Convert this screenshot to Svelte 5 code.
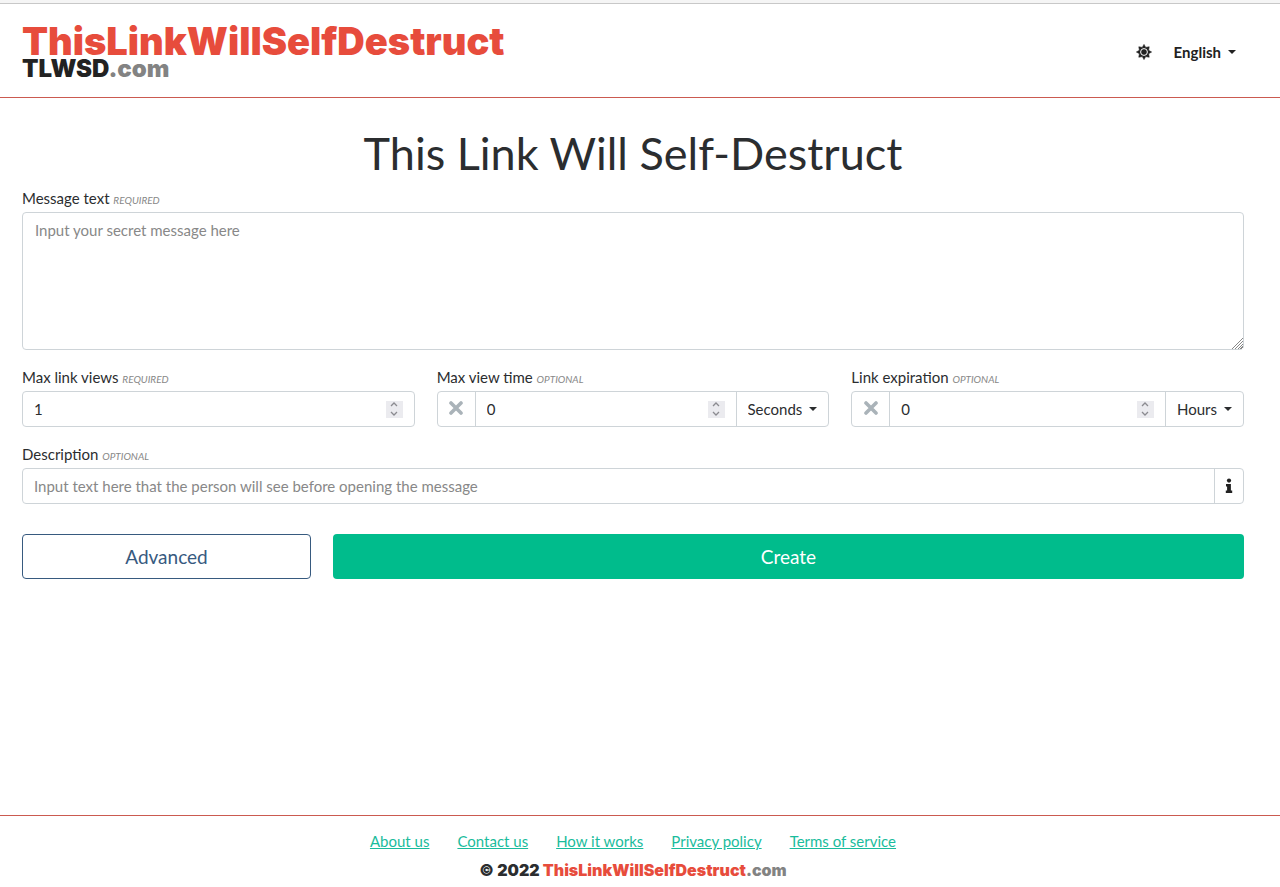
<script lang="ts">
	let message = $state('');
	let description = $state('');
	let views = $state(1);
	let viewTime = $state(0);
	let expiration = $state(0);
	let timeUnit = $state('Seconds');
	let expirationUnit = $state('Hours');
	let language = $state('English');

	const links = ['About us', 'Contact us', 'How it works', 'Privacy policy', 'Terms of service'];
</script>

{#snippet caret()}
	<svg class="caret" width="8" height="4" viewBox="0 0 8 4" aria-hidden="true">
		<path d="M0 0h8L4 4z" fill="currentColor" />
	</svg>
{/snippet}

{#snippet cross()}
	<svg width="16" height="16" viewBox="0 0 16 16" aria-hidden="true">
		<path d="M3 2l10 10M13 2L3 12" stroke="#aab3b9" stroke-width="3.6" stroke-linecap="round" />
	</svg>
{/snippet}

{#snippet spinner(name: string, up: () => void, down: () => void)}
	<div class="spinner">
		<button type="button" aria-label="Increase {name}" onclick={up}>
			<svg width="8" height="5" viewBox="0 0 8 5"><path d="M1 4l3-3 3 3" /></svg>
		</button>
		<button type="button" aria-label="Decrease {name}" onclick={down}>
			<svg width="8" height="5" viewBox="0 0 8 5"><path d="M1 1l3 3 3-3" /></svg>
		</button>
	</div>
{/snippet}

<div class="page">
	<header>
		<a class="logo" href="/">
			<span class="logo-name">ThisLinkWillSelfDestruct</span>
			<span class="logo-short">TLWSD<span class="com">.com</span></span>
		</a>
		<div class="tools">
			<button class="theme" type="button" aria-label="Toggle theme">
				<svg width="16" height="16" viewBox="0 0 16 16" aria-hidden="true">
					<path
						d="M8 .4l1.7 3L13.2 2.8l-.6 3.5L15.6 8l-3 1.7.6 3.5-3.5-.6L8 15.6l-1.7-3-3.5.6.6-3.5L.4 8l3-1.7-.6-3.5 3.5.6z"
						fill="#222"
						stroke="#222"
						stroke-width=".6"
					/>
					<circle cx="8" cy="8" r="3.4" fill="none" stroke="#fff" stroke-width="1" />
				</svg>
			</button>
			<div class="select language">
				<select aria-label="Language" bind:value={language}>
					<option>English</option>
				</select>
				{@render caret()}
			</div>
		</div>
	</header>

	<main>
		<h1>This Link Will Self-Destruct</h1>
		<form onsubmit={(e) => e.preventDefault()}>
			<div class="field wide">
				<label for="message">Message text <em>REQUIRED</em></label>
				<textarea id="message" placeholder="Input your secret message here" bind:value={message}></textarea>
			</div>

			<div class="field third">
				<label for="views">Max link views <em>REQUIRED</em></label>
				<div class="group">
					<input id="views" type="number" min="1" bind:value={views} />
					{@render spinner('views', () => views++, () => (views = Math.max(1, views - 1)))}
				</div>
			</div>

			<div class="field third">
				<label for="view-time">Max view time <em>OPTIONAL</em></label>
				<div class="group">
					<button class="clear" type="button" aria-label="Clear view time" onclick={() => (viewTime = 0)}>
						{@render cross()}
					</button>
					<input id="view-time" type="number" min="0" bind:value={viewTime} />
					{@render spinner('view time', () => viewTime++, () => (viewTime = Math.max(0, viewTime - 1)))}
					<div class="select unit">
						<select aria-label="View time unit" bind:value={timeUnit}>
							<option>Seconds</option>
							<option>Minutes</option>
						</select>
						{@render caret()}
					</div>
				</div>
			</div>

			<div class="field third">
				<label for="expiration">Link expiration <em>OPTIONAL</em></label>
				<div class="group">
					<button class="clear" type="button" aria-label="Clear expiration" onclick={() => (expiration = 0)}>
						{@render cross()}
					</button>
					<input id="expiration" type="number" min="0" bind:value={expiration} />
					{@render spinner('expiration', () => expiration++, () => (expiration = Math.max(0, expiration - 1)))}
					<div class="select unit">
						<select aria-label="Expiration unit" bind:value={expirationUnit}>
							<option>Hours</option>
							<option>Days</option>
						</select>
						{@render caret()}
					</div>
				</div>
			</div>

			<div class="field wide">
				<label for="description">Description <em>OPTIONAL</em></label>
				<div class="group">
					<input
						id="description"
						type="text"
						placeholder="Input text here that the person will see before opening the message"
						bind:value={description}
					/>
					<button class="info" type="button" aria-label="About the description">
						<svg width="8" height="16" viewBox="0 0 8 16" fill="#222" aria-hidden="true">
							<circle cx="4" cy="2.6" r="2.1" />
							<path d="M1 6h4.9v6.6H7.2V15H.8v-2.4h1.3V8.4H1z" />
						</svg>
					</button>
				</div>
			</div>

			<button class="btn advanced" type="button">Advanced</button>
			<button class="btn create" type="submit">Create</button>
		</form>
	</main>

	<footer>
		<nav>
			{#each links as link}
				<a href="/{link.toLowerCase().replaceAll(' ', '-')}">{link}</a>
			{/each}
		</nav>
		<p>© 2022 <span class="brand">ThisLinkWillSelfDestruct</span><span class="com">.com</span></p>
	</footer>
</div>

<style>
	:global(body) {
		background: #fff;
	}

	.page {
		box-sizing: border-box;
		min-height: 100vh;
		display: flex;
		flex-direction: column;
		border-top: 3px solid #f5f5f5;
		color: #2b2d2f;
		font-family: Lato, sans-serif;
		font-size: 15px;
		line-height: 22px;
	}

	.page * {
		box-sizing: border-box;
	}

	button,
	input,
	select,
	textarea {
		margin: 0;
		padding: 0;
		border: 0;
		background: none;
		color: inherit;
		font: inherit;
	}

	button,
	select {
		cursor: pointer;
	}

	header {
		display: flex;
		align-items: center;
		justify-content: space-between;
		padding: 22px 36px 16px 22px;
		border-top: 1px solid #c8c8c8;
		border-bottom: 1px solid #cb5a50;
	}

	.logo {
		display: flex;
		flex-direction: column;
		color: #222;
		font-family: Inter, sans-serif;
		font-weight: 900;
		text-decoration: none;
	}

	.logo-name {
		color: #e74c3c;
		font-size: 38px;
		line-height: 30px;
	}

	.logo-short {
		font-size: 24px;
		line-height: 25px;
	}

	.com {
		color: #838383;
	}

	.brand {
		color: #e74c3c;
	}

	.tools {
		display: flex;
		align-items: center;
		gap: 22px;
		padding-bottom: 4px;
	}

	.theme {
		display: flex;
	}

	.select {
		display: grid;
		align-items: center;
	}

	.select select {
		grid-area: 1 / 1;
		appearance: none;
		field-sizing: content;
		height: 100%;
		padding-right: 15px;
		outline-offset: -2px;
	}

	.caret {
		grid-area: 1 / 1;
		justify-self: end;
		pointer-events: none;
	}

	.language {
		padding-right: 8px;
		color: #222;
		font-weight: 700;
	}

	main {
		padding: 27px 36px 40px 22px;
	}

	h1 {
		margin: 0;
		font-size: 45px;
		font-weight: 400;
		line-height: 56px;
		text-align: center;
	}

	form {
		display: grid;
		grid-template-columns: repeat(12, 1fr);
		gap: 16px 22px;
		margin-top: 6px;
	}

	.field {
		display: flex;
		flex-direction: column;
		gap: 1px;
		min-width: 0;
	}

	.wide {
		grid-column: span 12;
	}

	.third {
		grid-column: span 4;
	}

	em {
		color: #888;
		font-size: 10px;
	}

	textarea,
	.group {
		border: 1px solid #ced4d8;
		border-radius: 4px;
	}

	textarea {
		height: 138px;
		padding: 6px 12px;
		resize: vertical;
	}

	textarea::-webkit-resizer {
		background:
			linear-gradient(135deg, #fff 60%, transparent 60%),
			repeating-linear-gradient(135deg, #fff 0 1px, #888 1px 2px);
	}

	::placeholder {
		color: #888;
		opacity: 1;
	}

	.group {
		display: flex;
		align-items: stretch;
		height: 36px;
	}

	.group input {
		flex: 1;
		min-width: 0;
		padding: 0 11px;
	}

	input[type='number'] {
		appearance: textfield;
	}

	.spinner {
		align-self: center;
		display: flex;
		flex-direction: column;
		width: 17px;
		height: 17px;
		margin-right: 11px;
		background: #ebebef;
	}

	.spinner button {
		flex: 1;
		display: flex;
		align-items: center;
		justify-content: center;
	}

	.spinner path {
		fill: none;
		stroke: #8b8b90;
		stroke-width: 1.3;
	}

	.clear {
		display: flex;
		align-items: center;
		justify-content: center;
		width: 38px;
		border-right: 1px solid #ced4d8;
	}

	.unit {
		padding: 0 11px;
		border-left: 1px solid #ced4d8;
	}

	.info {
		display: flex;
		align-items: center;
		justify-content: center;
		width: 29px;
		border-left: 1px solid #ced4d8;
	}

	.btn {
		height: 45px;
		margin-top: 14px;
		border-radius: 4px;
		font-size: 19px;
	}

	.advanced {
		grid-column: span 3;
		border: 1px solid #375a7f;
		color: #375a7f;
	}

	.create {
		grid-column: span 9;
		background: #00bc8c;
		color: #fff;
	}

	footer {
		display: flex;
		flex-direction: column;
		align-items: center;
		gap: 7px;
		margin-top: auto;
		padding: 14px 36px 6px 22px;
		border-top: 1px solid #cb5a50;
	}

	nav {
		display: flex;
		flex-wrap: wrap;
		gap: 28px;
	}

	nav a {
		color: #1abc9c;
	}

	footer p {
		margin: 0;
		font-family: Inter, sans-serif;
		font-size: 16px;
		font-weight: 900;
	}
</style>
